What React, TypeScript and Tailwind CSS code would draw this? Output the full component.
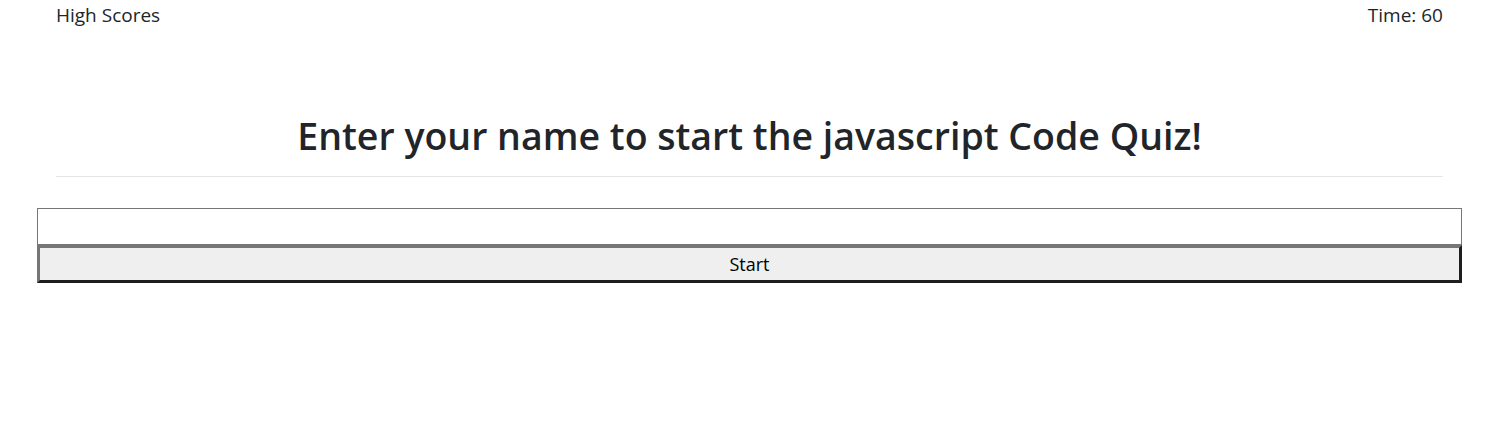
export default function App() {
  return (
    <div className="min-h-screen bg-white text-[#212529] font-['Open_Sans',sans-serif]">
      <header className="flex justify-between pl-[56px] pr-[43px] text-[19px] leading-[30px]">
        <a className="cursor-pointer">High Scores</a>
        <span>Time: 60</span>
      </header>

      <main className="pt-[82px]">
        <div className="ml-[56px] mr-[43px]">
          <h1 className="text-center text-[37.5px] leading-[48px] font-semibold">
            Enter your name to start the javascript Code Quiz!
          </h1>
          <hr className="mt-[16px] border-t border-[#e6e6e6]" />
        </div>

        <form className="ml-[37px] mr-[24px] mt-[31px] flex flex-col" onSubmit={(e) => e.preventDefault()}>
          <input
            type="text"
            className="h-[37px] border border-[#767676] bg-white px-2 outline-none"
          />
          <button
            type="submit"
            className="h-[38px] border-[3px] border-t-[#767676] border-l-[#767676] border-b-[#1e1e1e] border-r-[#1e1e1e] bg-[#efefef] text-[18px] leading-none text-black"
          >
            Start
          </button>
        </form>
      </main>
    </div>
  );
}
